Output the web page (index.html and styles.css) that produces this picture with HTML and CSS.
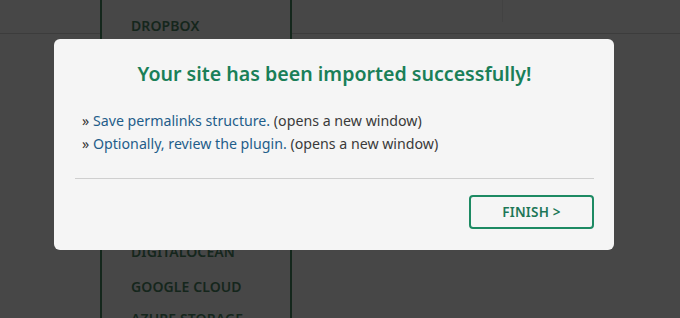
FILE: index.html
```html
<!DOCTYPE html>
<html>
<head>
<meta charset="utf-8">
<link rel="stylesheet" href="styles.css">
</head>
<body>
<div class="page">
  <div class="col col-left">
    <div class="head-row"></div>
  </div>
  <div class="col col-mid">
    <ul class="storage">
      <li class="first">DROPBOX</li>
      <li>FTP</li>
      <li>AMAZON S3</li>
      <li>GOOGLE DRIVE</li>
      <li>ONEDRIVE</li>
      <li>BACKBLAZE</li>
      <li>BOX</li>
      <li class="tall">DIGITALOCEAN</li>
      <li>GOOGLE CLOUD</li>
      <li>AZURE STORAGE</li>
    </ul>
  </div>
  <div class="col col-right">
    <div class="head-row">
      <div class="head-cell"></div>
    </div>
  </div>
</div>

<div class="modal">
  <h1 class="modal-title">Your site has been imported successfully!</h1>
  <ul class="steps">
    <li><span class="raquo">»</span> <a href="#" class="link">Save permalinks structure.</a> (opens a new window)</li>
    <li><span class="raquo">»</span> <a href="#" class="link">Optionally, review the plugin.</a> (opens a new window)</li>
  </ul>
  <hr class="divider">
  <div class="actions">
    <button class="finish">FINISH &gt;</button>
  </div>
</div>
</body>
</html>
```
FILE: styles.css
```css
html, body {
  margin: 0;
  padding: 0;
  height: 100%;
}
body {
  background: #474747;
  font-family: "Noto Sans", "Open Sans", sans-serif;
  overflow: hidden;
  position: relative;
}
.page {
  display: flex;
  height: 318px;
}
.col {
  height: 100%;
}
.col-left {
  width: 100px;
}
.col-mid {
  width: 188px;
  border-left: 2px solid #14271c;
  border-right: 2px solid #14271c;
  overflow: hidden;
}
.col-right {
  flex: 1;
}
.head-row {
  height: 33px;
  border-bottom: 1px solid #3c3c3c;
  display: flex;
}
.head-cell {
  width: 210px;
  height: 22px;
  border-right: 1px solid #424242;
}
.storage {
  list-style: none;
  margin: 0;
  padding: 10px 0 0 29px;
}
.storage li {
  height: 32px;
  line-height: 32px;
  font-size: 14px;
  font-weight: 600;
  color: #15261c;
  letter-spacing: 0.1px;
}
.storage li.first {
  height: 21px;
  line-height: 32px;
  margin-bottom: 13px;
}
.storage li.tall {
  height: 35px;
}
.modal {
  position: absolute;
  left: 54px;
  top: 39px;
  width: 560px;
  height: 211px;
  box-sizing: border-box;
  background: #f5f5f5;
  border-radius: 6px;
  padding: 22px 20px 0 21px;
}
.modal-title {
  margin: 0;
  text-align: center;
  font-size: 19.6px;
  font-weight: 600;
  color: #1a7f58;
  line-height: 26px;
}
.steps {
  list-style: none;
  margin: 22px 0 0 0;
  padding: 0 0 0 7px;
  font-size: 14.2px;
  color: #3a3a3a;
  line-height: 23px;
}
.raquo {
  color: #333;
}
.link {
  color: #1f5d8a;
  text-decoration: none;
}
.divider {
  border: 0;
  border-top: 1px solid #cfcfcf;
  margin: 23px 0 0 0;
}
.actions {
  display: flex;
  justify-content: flex-end;
  margin-top: 16px;
}
.finish {
  width: 125px;
  height: 34px;
  background: transparent;
  border: 2px solid #1d8a63;
  border-radius: 4px;
  color: #1d7757;
  font-family: inherit;
  font-size: 13.5px;
  font-weight: 600;
  letter-spacing: 0.2px;
  cursor: pointer;
}
```
